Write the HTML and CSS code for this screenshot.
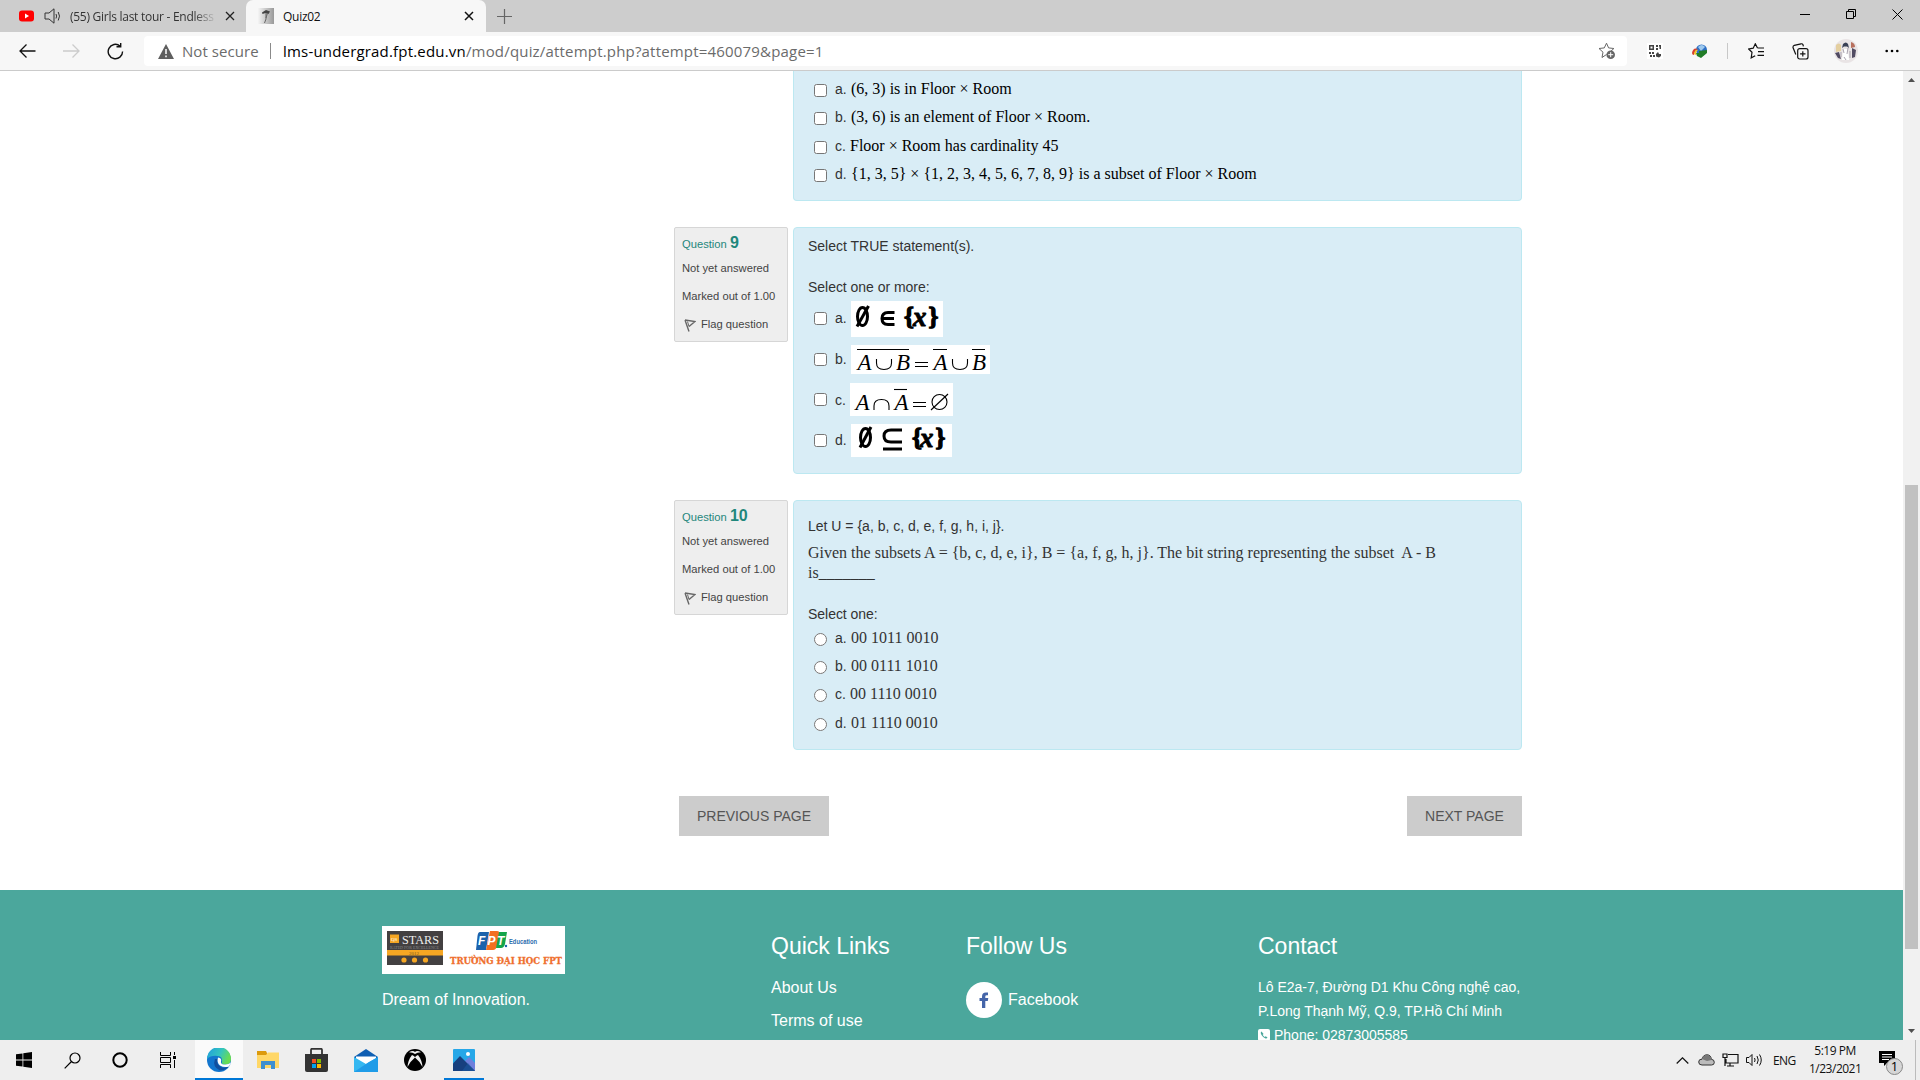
FILE: index.html
```html
<!DOCTYPE html>
<html lang="en">
<head>
<meta charset="utf-8">
<title>Quiz02</title>
<link rel="stylesheet" href="styles.css">
</head>
<body>
<header class="tabs">
  <div class="tab tab-back">
    <svg class="yt" width="15" height="12" viewBox="0 0 15 12"><rect width="15" height="11" y=".5" rx="3" fill="#f00"/><path d="M6 3.600v5L10 6z" fill="#fff"/></svg>
    <svg class="snd" width="17" height="16" viewBox="0 0 17 16" fill="none" stroke="#333"><path d="M1 5h4L10 .8v14.400L5 11H1z"/><path d="M12 6q1.200 2 0 4.500M14.200 4q2.600 4 0 8.500"/></svg>
    <span class="tab-title fade">(55) Girls last tour - Endless</span>
    <svg class="x" width="10" height="10" viewBox="0 0 10 10"><path d="M1 1l8 8M9 1L1 9" stroke="#222" stroke-width="1.300"/></svg>
  </div>
  <div class="tab tab-on">
    <svg width="16" height="16" viewBox="0 0 16 16"><defs><linearGradient id="fv" x2="1"><stop stop-color="#f5f5f5"/><stop offset="1" stop-color="#999"/></linearGradient></defs><rect width="16" height="16" fill="url(#fv)"/><path d="M4 4.500l4-2.500 4 1.500-1.500 2.500-3-1-3 1z" fill="#444"/><path d="M8 5v6l-1.500 4M8 10l1.500-5" stroke="#666" fill="none"/></svg>
    <span class="tab-title">Quiz02</span>
    <svg class="x" width="10" height="10" viewBox="0 0 10 10"><path d="M1 1l8 8M9 1L1 9" stroke="#111" stroke-width="1.500"/></svg>
  </div>
  <svg class="plus" width="15" height="15" viewBox="0 0 15 15"><path d="M7.500 0v15M0 7.500h15" stroke="#666" stroke-width="1.200"/></svg>
  <div class="win">
    <svg width="11" height="11" viewBox="0 0 11 11"><path d="M0 5.500h10" stroke="#000"/></svg>
    <svg width="11" height="11" viewBox="0 0 11 11" fill="none" stroke="#000"><path d="M.5 2.500h7v7h-7zM2.500 2.500v-2h7v7h-2"/></svg>
    <svg width="11" height="11" viewBox="0 0 11 11"><path d="M.5.5l10 10M10.500.5l-10 10" stroke="#000"/></svg>
  </div>
</header>
<nav class="bar">
  <div class="nav">
    <svg width="17" height="14" viewBox="0 0 17 14" fill="none" stroke="#111" stroke-width="1.300"><path d="M16.500 7H1M7.500.5L1 7l6.500 6.500"/></svg>
    <svg width="17" height="14" viewBox="0 0 17 14" fill="none" stroke="#ccc" stroke-width="1.300"><path d="M0 7h15.500M9.500.5L16 7l-6.500 6.500"/></svg>
    <svg width="17" height="17" viewBox="0 0 17 17" fill="none" stroke="#111" stroke-width="1.400"><path d="M15.600 8.500A7.200 7.200 0 1 1 13 3M9.500 3.700h4.200V0"/></svg>
  </div>
  <div class="addr">
    <svg width="16" height="15" viewBox="0 0 16 15"><path d="M8 0l8 15H0z" fill="#5f5f5f"/><path d="M8 5v5M8 11.500v1.700" stroke="#fff" stroke-width="1.500"/></svg>
    <span class="ns">Not secure</span><i class="sep"></i>
    <span class="url"><b>lms-undergrad.fpt.edu.vn</b>/mod/quiz/attempt.php?attempt=460079&amp;page=1</span>
    <svg class="fav" width="18" height="18" viewBox="0 0 18 18" fill="none" stroke="#666"><path d="M8.500 1.200l2.100 4.700 5.300.6-4 3.600M8.500 12.500L4 15.500l1-5.300L1 6.500l5.300-.6 2.200-4.700"/><circle cx="12.700" cy="12.700" r="4.300" fill="#666" stroke="none"/><path d="M12.700 10.200v5M10.200 12.700h5" stroke="#fff"/></svg>
  </div>
  <div class="ext">
    <svg width="16" height="16" viewBox="0 0 16 16" fill="#444"><rect width="16" height="16" fill="#fff"/><path d="M2 2h5v5H2zM9 2h2v2H9zM12 2h2v4h-1.500V3.500H12zM9 5h2v2H9zM2 9h2v2H2zM5 9h2v2H5zM3 12h2v2H3zM6 12h2v2H6zM9 11l2-2 1 2h2v2l-2 1.500-3-1z"/><path d="M3.500 3.500h2v2h-2z" fill="#fff"/></svg>
    <svg class="idm" width="17" height="17" viewBox="0 0 17 17"><circle cx="10.500" cy="7" r="5.500" fill="#2d6fc4"/><path d="M7 4q4-4 7 0l-4 4z" fill="#9ec9ee"/><path d="M1 10q1-6 6-4-3 1-4 6-2 0-2-2z" fill="#d8402b"/><path d="M3 11q1-5 4-4-2 1-2 5z" fill="#f2c829"/><path d="M5 10h3V8l8-1v3l-6 5-4-2z" fill="#217d27"/></svg>
    <i class="sep light"></i>
    <svg class="stars" width="17" height="16" viewBox="0 0 17 16" fill="none" stroke="#111" stroke-width="1.200"><path d="M9.500 5L7.300.8 5.200 5.200.7 6l3.300 3.300-.8 5.500 4-2.100M9.500 5h6.500M10 8.700h6M9.500 12.400H16"/></svg>
    <svg class="coll" width="17" height="17" viewBox="0 0 17 17" fill="none" stroke="#111" stroke-width="1.200"><rect x="5.700" y="5.700" width="10.300" height="10.300" rx="2"/><path d="M10.800 8.200v5.400M8.100 10.900h5.400M3.800 11.500L1 4.500Q.8 3 2.300 2.300L9 .8q1.500-.3 2 1l.4 1.500"/></svg>
    <svg class="ava" width="24" height="24" viewBox="0 0 24 24"><circle cx="12" cy="12" r="12" fill="#e9e4e5"/><path d="M2 6q3-3 5 0l0 6-5 1z" fill="#e4cf9f"/><path d="M9 5q3-3 5 0l1 4-2-1.500h-3L8 9z" fill="#394055"/><path d="M17 3q4 1 4 5l-4 1z" fill="#b8705e"/><path d="M1 14l4-1 2 7-3-1zM18 9l4 2-1 7-3 1z" fill="#514b62"/><path d="M9 10h5l1 11H8z" fill="#fff"/><path d="M9 10l1 4M14 9l-1 6M7 13v5M16 12v7M10 18l2 3" stroke="#a9a2ae"/></svg>
    <svg class="dots" width="14" height="4" viewBox="0 0 14 4"><circle cx="1.700" cy="2" r="1.300"/><circle cx="7" cy="2" r="1.300"/><circle cx="12.300" cy="2" r="1.300"/></svg>
  </div>
</nav>
<div class="view">
<main class="page">
  <section class="q q8">
    <div class="body">
      <label class="opt"><input type="checkbox"><span class="let">a.</span><span class="tm blk">(6, 3) is in Floor × Room</span></label>
      <label class="opt"><input type="checkbox"><span class="let">b.</span><span class="tm blk">(3, 6) is an element of Floor × Room.</span></label>
      <label class="opt"><input type="checkbox"><span class="let let-c">c.</span><span class="tm blk">Floor × Room has cardinality 45</span></label>
      <label class="opt"><input type="checkbox"><span class="let">d.</span><span class="tm blk">{1, 3, 5} × {1, 2, 3, 4, 5, 6, 7, 8, 9} is a subset of Floor × Room</span></label>
    </div>
  </section>
  <section class="q q9">
    <aside class="info">
      <h3>Question <b>9</b></h3><p>Not yet answered</p><p>Marked out of 1.00</p>
      <p class="flag"><svg width="12" height="13" viewBox="0 0 12 13" fill="none" stroke="#666"><path d="M1 1l4 11.500M1 1l10 1.500-6 5" stroke-width="1.400"/><path d="M3.500 2.500l1.500 5"/></svg>Flag question</p>
    </aside>
    <div class="body">
      <p class="stem">Select TRUE statement(s).</p>
      <p class="ask">Select one or more:</p>
      <label class="opt big"><input type="checkbox"><span class="let">a.</span>
        <svg class="eq eq-a" width="92" height="36" viewBox="0 0 92 36"><ellipse cx="11.500" cy="15.500" rx="5" ry="9" class="k3"/><path d="M6 25.500L17.500 5" class="k3"/><path d="M43.500 11.500h-6.500q-6 0-6 6t6 6h6.500M31 17.500h12" class="k3"/><text x="53" y="24" class="br">{</text><text x="62" y="25" class="bx">x</text><text x="77.500" y="24" class="br">}</text></svg></label>
      <label class="opt big"><input type="checkbox"><span class="let">b.</span>
        <svg class="eq" width="139" height="29" viewBox="0 0 139 29"><path d="M6 4.500h52M82 4.500h14M121 4.500h13" class="k1"/><text x="6.500" y="25" class="it">A</text><path d="M25.500 14v4q0 6.500 7.500 6.500t7.500-6.500v-4M101.500 14v4q0 6.500 7.500 6.500t7.500-6.500v-4" class="k1"/><text x="45" y="25" class="it">B</text><path d="M64 17.500h13M64 21.500h13" class="k1"/><text x="82.500" y="25" class="it">A</text><text x="121" y="25" class="it">B</text></svg></label>
      <label class="opt big"><input type="checkbox"><span class="let">c.</span>
        <svg class="eq eq-c" width="103" height="33" viewBox="0 0 103 33"><path d="M44 6.500h13" class="k1"/><text x="5.500" y="26.500" class="it">A</text><path d="M24 27v-4q0-6.500 7.500-6.500t7.500 6.500v4M63 19.500h13M63 23.500h13" class="k1"/><text x="44.500" y="26.500" class="it">A</text><circle cx="89.500" cy="19" r="7.500" class="k1"/><path d="M81 27l17-16" class="k1"/></svg></label>
      <label class="opt big"><input type="checkbox"><span class="let">d.</span>
        <svg class="eq" width="101" height="33" viewBox="0 0 101 33"><ellipse cx="14.500" cy="13.500" rx="5" ry="9" class="k3"/><path d="M9 23.500L20 3" class="k3"/><path d="M51 6H40q-7 0-7 6t7 6h11M32 25h19" class="k3"/><text x="61" y="22" class="br">{</text><text x="69" y="23" class="bx">x</text><text x="84.500" y="22" class="br">}</text></svg></label>
    </div>
  </section>
  <section class="q q10">
    <aside class="info">
      <h3>Question <b>10</b></h3><p>Not yet answered</p><p>Marked out of 1.00</p>
      <p class="flag"><svg width="12" height="13" viewBox="0 0 12 13" fill="none" stroke="#666"><path d="M1 1l4 11.500M1 1l10 1.500-6 5" stroke-width="1.400"/><path d="M3.500 2.500l1.500 5"/></svg>Flag question</p>
    </aside>
    <div class="body">
      <p class="stem">Let U = {a, b, c, d, e, f, g, h, i, j}.</p>
      <p class="tm given">Given the subsets A = {b, c, d, e, i}, B = {a, f, g, h, j}. The bit string representing the subset&nbsp; A - B<br>is_______</p>
      <p class="ask">Select one:</p>
      <label class="opt"><input type="radio" name="q10"><span class="let">a.</span><span class="tm">00 1011 0010</span></label>
      <label class="opt"><input type="radio" name="q10"><span class="let">b.</span><span class="tm">00 0111 1010</span></label>
      <label class="opt"><input type="radio" name="q10"><span class="let let-c">c.</span><span class="tm">00 1110 0010</span></label>
      <label class="opt"><input type="radio" name="q10"><span class="let">d.</span><span class="tm">01 1110 0010</span></label>
    </div>
  </section>
  <div class="pager"><button class="prev">PREVIOUS PAGE</button><button class="next">NEXT PAGE</button></div>
  <footer class="foot">
    <div class="brand">
      <svg class="logo" width="183" height="48" viewBox="0 0 183 48"><rect width="183" height="48" fill="#fff"/><rect x="5" y="5" width="56" height="34" fill="#434041"/><rect x="5" y="24" width="56" height="5.500" fill="#f5a623"/><rect x="8" y="8.500" width="9" height="8.500" fill="#f5a623"/><text x="9" y="15" class="lg" font-size="5" fill="#fff">QS</text><text x="20" y="18" class="lg" font-size="13" fill="#eee" textLength="37" lengthAdjust="spacingAndGlyphs">STARS</text><text x="8" y="22.500" class="lg" font-size="4" fill="#888" textLength="49">RATED FOR EXCELLENCE</text><text x="27" y="28.800" class="lg" font-size="5" fill="#7a5a20">2012</text><g fill="#f5a623"><circle cx="22" cy="34" r="2.600"/><circle cx="32.500" cy="34" r="2.600"/><circle cx="43.500" cy="34" r="2.600"/></g>
      <path d="M98 6h9l-3 18H94l1.500-14q.5-4 2.500-4z" fill="#1c62ac"/><path d="M108 5h7q3 0 2.500 4l-2.500 11q-1 4-4 4h-7z" fill="#f26f21"/><path d="M117 6h8l-2 12q-1 4-4 4h-5z" fill="#13a54a"/><circle cx="124" cy="20" r="1.200" fill="#1c62ac"/><g class="fp"><text x="96" y="19">F</text><text x="105.500" y="19">P</text><text x="115" y="19">T</text></g><text x="127" y="17.500" class="edu" textLength="28" lengthAdjust="spacingAndGlyphs">Education</text><text x="68" y="38" class="uni" textLength="112" lengthAdjust="spacingAndGlyphs">TRƯỜNG ĐẠI HỌC FPT</text></svg>
      <p>Dream of Innovation.</p>
    </div>
    <div class="links"><h4>Quick Links</h4><p>About Us</p><p>Terms of use</p></div>
    <div class="follow"><h4>Follow Us</h4><p><svg width="36" height="36" viewBox="0 0 36 36"><circle cx="18" cy="18" r="18" fill="#fff"/><path d="M22 10.500h-2q-4 0-4 4.200V16h-2.500v3H16v7h3.300v-7h2.500l.5-3h-3v-1.500q0-1.300 1.400-1.300H22z" fill="#4565a9"/></svg>Facebook</p></div>
    <div class="contact"><h4>Contact</h4><p>Lô E2a-7, Đường D1 Khu Công nghệ cao,</p><p>P.Long Thạnh Mỹ, Q.9, TP.Hồ Chí Minh</p><p class="phone"><svg width="12" height="12" viewBox="0 0 12 12"><rect width="12" height="12" rx="2" fill="#fff"/><path d="M3.500 2.500q-1.500 1 0 3.500t4 3.500q1.500.3 2-1L7.700 7.200l-1 .8q-1.500-.8-2-2.200l.9-.8z" fill="#4ba79c"/></svg>Phone: 02873005585</p></div>
  </footer>
</main>
<div class="scroll"><svg width="7" height="4" viewBox="0 0 7 4"><path d="M3.500 0L7 4H0z" fill="#505050"/></svg><i class="thumb"></i><svg width="7" height="4" viewBox="0 0 7 4"><path d="M0 0h7L3.500 4z" fill="#505050"/></svg></div>
</div>
<div class="task">
  <div class="sys">
    <span><svg width="16" height="16" viewBox="0 0 16 16"><path d="M0 2.300L6.500 1.400v6.200H0zM7.300 1.300L16 0v7.600H7.300zM0 8.400h6.500v6.200L0 13.700zM7.300 8.400H16V16l-8.700-1.300z"/></svg></span>
    <span><svg width="17" height="17" viewBox="0 0 17 17" fill="none" stroke="#000" stroke-width="1.200"><circle cx="11" cy="6" r="5"/><path d="M7.500 9.500L.7 16.300"/></svg></span>
    <span><svg width="16" height="16" viewBox="0 0 16 16"><circle cx="8" cy="8" r="6.700" fill="none" stroke="#000" stroke-width="2"/></svg></span>
    <span><svg width="16" height="16" viewBox="0 0 16 16" fill="none" stroke="#000"><path d="M.5 0v3.500h10V0M.5 16v-3.500h10V16M.5 5.500h10v5H.5zM14.500 0v3M14.500 8v8"/><path d="M13 4h3v3h-3z" fill="#000" stroke="none"/></svg></span>
  </div>
  <div class="apps">
    <span class="cur"><svg width="24" height="24" viewBox="0 0 24 24"><defs><linearGradient id="e1" x2="1" y2=".4"><stop stop-color="#1e9ce0"/><stop offset=".6" stop-color="#35c5bd"/><stop offset="1" stop-color="#67dc54"/></linearGradient></defs><circle cx="12" cy="12" r="12" fill="#1376ce"/><path d="M0 11A12 12 0 0 1 24 11q0 5-5 5.500-5 .5-4-3 .5-5-4-5.500Q4 7 0 11z" fill="url(#e1)"/><path d="M8 11q-3 8 5 11.500 5 0 9-4-6 2.500-9.500-.5Q9 15 11 11z" fill="#124f9e"/><path d="M11 9.500q4 .5 3 4-.7 2.500 3 3 4 .5 7-2l-2 4q-5 1.500-9-1-3.500-3-2-8z" fill="#fff"/></svg></span>
    <span><svg width="22" height="18" viewBox="0 0 22 18"><path d="M0 0h9l1 2v3H0z" fill="#dc9a0c"/><path d="M0 4h9l2-2.500h11V17H0z" fill="#ffd767"/><path d="M4 18v-8h14v8h-4v-4H8v4z" fill="#3e8fd0"/></svg></span>
    <span><svg width="23" height="24" viewBox="0 0 23 24"><path d="M0 6h23v16q0 2-2 2H2q-2 0-2-2z" fill="#333"/><path d="M6 8V2q0-1.200 1-1.200h9q1 0 1 1.200v6" fill="none" stroke="#333" stroke-width="1.800"/><path d="M7 11h4v4H7z" fill="#f25022"/><path d="M12 11h4v4h-4z" fill="#7fba00"/><path d="M7 16h4v4H7z" fill="#00a4ef"/><path d="M12 16h4v4h-4z" fill="#ffb900"/></svg></span>
    <span><svg width="24" height="23" viewBox="0 0 24 23"><path d="M0 8l12-8 12 8v5H0z" fill="#0f5fb3"/><path d="M2 7.500h20v6L12 17 2 13z" fill="#fff"/><path d="M0 8l12 7 12-7v15H0z" fill="#35b8f1"/><path d="M0 23L15 13l9-5v15z" fill="#1f9ce8"/></svg></span>
    <span><svg width="22" height="22" viewBox="0 0 22 22"><circle cx="11" cy="11" r="11"/><path d="M5 3.300Q9 3.500 11 5q2-1.500 6-1.700Q13 .7 11 3 9 .7 5 3.300zM8 6Q4 11 3.500 18q3-6 7.500-9.500Q15.500 12 18.500 18 18 11 14 6q-1.500.5-3 2Q9.500 6.500 8 6z" fill="#f0f0f0"/></svg></span>
    <span class="run"><svg width="22" height="22" viewBox="0 0 22 22"><rect width="22" height="22" rx="1" fill="#26a7e8"/><path d="M10 14l6-6 6 6v8H10z" fill="#6f7fdc"/><path d="M0 14.500L7 7l15 15H0z" fill="#17407f"/><path d="M9 22l6-8 7 8z" fill="#1d5ca5" opacity=".5"/><circle cx="15" cy="5" r="2" fill="#fff"/></svg></span>
  </div>
  <div class="tray">
    <svg width="13" height="7" viewBox="0 0 13 7"><path d="M.7 6.500l5.800-5.700 5.800 5.700" fill="none" stroke="#111" stroke-width="1.200"/></svg>
    <svg width="17" height="12" viewBox="0 0 17 12"><path d="M4 11Q.7 11 .7 8T4 5.200Q5 .8 9 .8t4.300 4.500q3 .2 3 3T13.500 11z" fill="#bbb" stroke="#333"/><path d="M4 5q1-4 5-4t4.500 5L9 7z" fill="#777"/></svg>
    <svg width="17" height="14" viewBox="0 0 17 14" fill="none" stroke="#111" stroke-width="1.200"><path d="M6 1.500h10v8.500H4V6M8 10.500v2.500M5 13h7M1 1h4v3.500H1zM3 4.500V13"/></svg>
    <svg width="17" height="14" viewBox="0 0 17 14" fill="none" stroke="#111"><path d="M.5 4.500H3l3-3v11l-3-3H.5zM8.500 5q1.200 2 0 4M11 3q2.500 4 0 8M13.500 1.500q3.500 5.500 0 11"/></svg>
    <span class="eng">ENG</span>
    <span class="clock">5:19 PM<br>1/23/2021</span>
    <svg class="ac" width="25" height="26" viewBox="0 0 25 26"><path d="M0 1h16v12H8l-3 3v-3H0z"/><path d="M3 4.500h10M3 7h10M3 9.500h7" stroke="#fff"/><circle cx="15.500" cy="16.500" r="8" fill="#d6d6d6" stroke="#888"/><text x="15.500" y="21" text-anchor="middle" class="n">1</text></svg>
    <i class="edge"></i>
  </div>
</div>
</body>
</html>
```
FILE: styles.css
```css
* { box-sizing: border-box; }
body { margin: 0; width: 1920px; height: 1080px; overflow: hidden; display: flex; flex-direction: column; background: #fff; font-family: "Liberation Sans", Arial, sans-serif; }
p, h3, h4 { margin: 0; font-weight: normal; }
svg { flex: none; display: block; }

.tabs, .bar, .task { font-family: "Open Sans", "Noto Sans", sans-serif; flex: none; }
.tabs { height: 32px; background: #cdcdcd; display: flex; align-items: center; }
.tab { display: flex; align-items: center; height: 32px; }
.tab-back { width: 246px; padding: 0 11px 0 18px; }
.yt { margin-left: 1px; }
.snd { margin-left: 10px; }
.tab-title { font-size: 12px; white-space: nowrap; letter-spacing: -0.27px; color: #111; margin-left: 9px; }
.fade { width: 147px; overflow: hidden; color: #333; margin-right: 8px; -webkit-mask-image: linear-gradient(90deg, #000 84%, transparent); mask-image: linear-gradient(90deg, #000 84%, transparent); }
.x { margin-left: auto; }
.tab-on { width: 240px; background: #f7f7f7; border-radius: 7px 7px 0 0; padding: 0 12px; }
.plus { margin-left: 11px; }
.win { margin-left: auto; display: flex; gap: 35px; padding: 0 17px 4px 0; }

.bar { height: 39px; background: #f7f7f7; border-bottom: 1px solid #cbcbcb; display: flex; align-items: center; }
.nav { display: flex; align-items: center; gap: 27px; padding-left: 19px; width: 144px; }
.addr { width: 1483px; height: 30px; background: #fff; border-radius: 4px; display: flex; align-items: center; padding: 0 11px 0 14px; font-size: 15px; color: #6b6b6b; }
.ns { width: 77px; margin-left: 8px; white-space: nowrap; letter-spacing: 0.07px; }
.sep { width: 1px; height: 16px; background: #8a8a8a; margin: 0 12px 0 11px; }
.url { white-space: nowrap; letter-spacing: 0.185px; }
.url b { font-weight: normal; color: #000; }
.fav { margin-left: auto; }
.ext { flex: 1; display: flex; align-items: center; padding-left: 20px; }
.idm { margin-left: 28px; }
.sep.light { background: #c8c8c8; margin: 0 20px 0 19px; }
.coll { margin-left: 27px; }
.ava { margin-left: 25px; }
.dots { margin-left: 27px; }

.view { flex: none; height: 969px; display: flex; }
.page { width: 1903px; overflow: hidden; display: flex; flex-direction: column; }
.q { width: 848px; margin-left: 674px; display: flex; align-items: flex-start; justify-content: space-between; color: #333; font-size: 14px; flex: none; }
.body { width: 729px; background: #d9edf6; border: 1px solid #bce8f1; border-radius: 4px; padding-left: 14px; margin-left: auto; }
.q8 .body { height: 130px; border-top: 0; border-radius: 0 0 4px 4px; padding-top: 4px; }
.q9 { margin-top: 26px; }
.q9 .body { height: 247px; }
.q10 { margin-top: 26px; }
.q10 .body { height: 250px; }
.info { width: 114px; height: 115px; background: #eee; border: 1px solid #d6d6d6; border-radius: 2px; padding: 5px 0 0 7px; font-size: 11.2px; white-space: nowrap; color: #444; }
.info h3 { font-size: 11.2px; line-height: 20px; color: #1f877c; }
.info h3 b { font-size: 16px; }
.info p { line-height: 28px; letter-spacing: 0; }
.flag { display: flex; align-items: center; gap: 5px; padding-left: 2px; }
.flag svg { margin-top: 3px; }
.stem { line-height: 20px; padding-top: 8px; }
.ask { line-height: 20px; margin-top: 21px; letter-spacing: -0.03px; }
.q10 .stem { padding-top: 15px; }
.given { line-height: 20px; margin-top: 7px; }
.q10 .ask { margin-top: 21px; }
.tm { font-family: "Liberation Serif", "Times New Roman", serif; font-size: 16px; white-space: nowrap; }
.blk { color: #000; }
.opt { display: flex; align-items: center; height: 28.330px; }
.q10 .opt { height: 28.200px; }
.opt input { width: 13px; height: 13px; margin: 3px 8px 0 6px; flex: none; }
.let { width: 16px; flex: none; }
.let-c { width: 15px; }
.big { height: 40.700px; }
.q9 .ask + .opt { margin-top: 1px; }
.big input { margin-top: 0; }
.eq { background: #fff; overflow: visible; }
.eq-a { margin-top: 1px; }
.eq-c { margin-left: -1px; }
.k1, .k2, .k3 { fill: none; stroke: #000; }
.k1 { stroke-width: 1.100; }
.k3 { stroke-width: 3; }
.it { font: italic 23px "Liberation Serif", serif; }
.bx { font: italic bold 27px "Liberation Serif", serif; stroke: #000; stroke-width: .900; }
.br { font: bold 25px "Liberation Serif", serif; stroke: #000; stroke-width: 1.300; }

.pager { width: 843px; margin: 46px 0 0 679px; display: flex; justify-content: space-between; flex: none; }
.pager button { height: 40px; border: 0; padding: 0; background: #ccc; color: #555; font: 14px "Liberation Sans", Arial, sans-serif; }
.prev { width: 150px; }
.next { width: 115px; }

.foot { flex: none; height: 150px; margin-top: 54px; background: #4ba79c; color: #fff; display: grid; grid-template-columns: 389px 195px 292px 400px; padding-left: 382px; font-size: 16px; overflow: hidden; }
.foot > div { padding-top: 42px; white-space: nowrap; }
.foot .brand { padding-top: 36px; }
.logo { overflow: visible; }
.brand p { margin-top: 15px; line-height: 22px; letter-spacing: -0.03px; }
.foot h4 { font-size: 23px; line-height: 28px; }
.links p { line-height: 33px; }
.links h4 + p { margin-top: 11px; }
.follow p { display: flex; align-items: center; gap: 6px; margin-top: 22px; height: 36px; }
.contact p { font-size: 14px; line-height: 24px; }
.contact h4 + p { margin-top: 15px; }
.phone { display: flex; align-items: center; gap: 4px; }
.lg { font-family: "Liberation Serif", serif; }
.fp { font: italic bold 12px "Liberation Sans", sans-serif; fill: #fff; }
.edu { font: bold 7px "Liberation Sans", sans-serif; fill: #2b6cae; }
.uni { font: bold 10px "DejaVu Serif", serif; fill: #ef6f2e; stroke: #ef6f2e; stroke-width: .300; }

.scroll { width: 17px; background: #f1f1f1; display: flex; flex-direction: column; align-items: center; padding: 7px 0 7px; }
.thumb { width: 13px; height: 464px; background: #c1c1c1; margin: 403px 0 auto; }

.task { height: 40px; background: #eee; display: flex; }
.sys { display: flex; width: 195px; }
.sys span { width: 48px; display: flex; align-items: center; justify-content: center; }
.apps { display: flex; }
.apps span { width: 49px; display: flex; align-items: center; justify-content: center; }
.apps .cur { width: 48px; background: #fafafa; border-bottom: 2px solid #0078d7; padding-top: 2px; }
.apps .run { width: 40px; margin-left: 5px; border-bottom: 2px solid #0078d7; padding-top: 2px; }
.tray { margin-left: auto; display: flex; align-items: center; font-size: 12px; color: #111; }
.tray svg { margin-right: 7px; }
.tray svg:first-child { margin-right: 9px; }
.eng { width: 23px; margin: 0 13px 0 3px; letter-spacing: -0.600px; white-space: nowrap; }
.clock { width: 52px; text-align: center; line-height: 18px; letter-spacing: -0.500px; white-space: nowrap; }
.tray .ac { margin: 6px 0 0 18px; }
.n { font: 13px "Open Sans", sans-serif; }
.edge { width: 1px; height: 40px; background: #bbb; margin: 0 4px 0 11px; }
```
